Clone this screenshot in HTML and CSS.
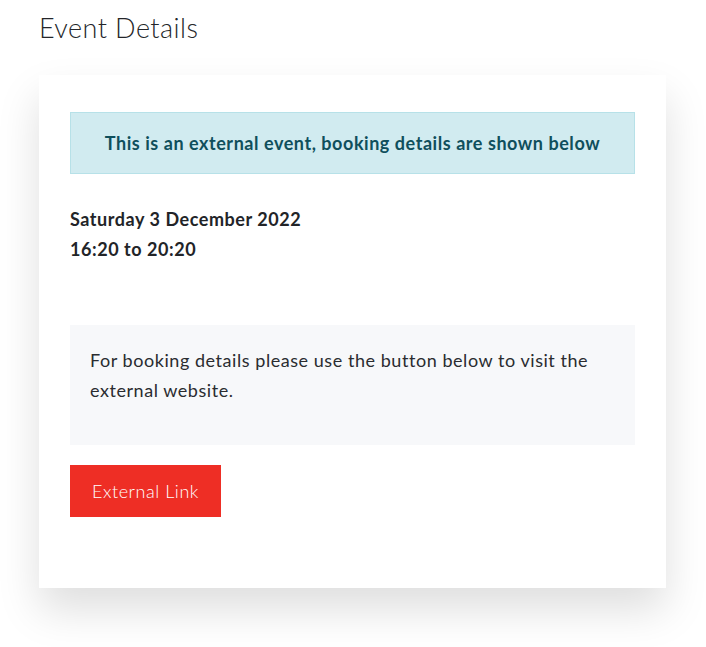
FILE: index.html
```html
<!DOCTYPE html>
<html lang="en">
<head>
<meta charset="utf-8">
<title>Event Details</title>
<link rel="stylesheet" href="styles.css">
</head>
<body>
<main class="page">
  <h1 class="page-title">Event Details</h1>
  <section class="card">
    <div class="notice">This is an external event, booking details are shown below</div>
    <div class="when">
      <div>Saturday 3 December 2022</div>
      <div>16:20 to 20:20</div>
    </div>
    <div class="info">For booking details please use the button below to visit the external website.</div>
    <a class="btn" href="#">External Link</a>
  </section>
</main>
</body>
</html>
```
FILE: styles.css
```css
* { box-sizing: border-box; }
html, body { margin: 0; padding: 0; background: #ffffff; }
body {
  font-family: Lato, "Open Sans", "Liberation Sans", sans-serif;
  color: #222428;
  letter-spacing: 0.55px;
}
.page {
  padding: 8px 40px 59px 39px;
}
.page-title {
  margin: 0 0 28px 0;
  font-size: 27px;
  font-weight: 300;
  line-height: 39px;
  letter-spacing: 0.45px;
  color: #24262a;
}
.card {
  background: #fff;
  box-shadow: 0 22px 40px rgba(0,0,0,0.13);
  padding: 37px 31px 71px 31px;
  display: flex;
  flex-direction: column;
  align-items: flex-start;
}
.notice {
  align-self: stretch;
  background: #d1ebf0;
  border: 1px solid #b7e1e8;
  color: #0f4f5c;
  font-weight: 700;
  font-size: 18px;
  text-align: center;
  height: 62px;
  line-height: 60px;
}
.when {
  margin-top: 30px;
  font-weight: 700;
  font-size: 18px;
  line-height: 30px;
  color: #222428;
}
.info {
  align-self: stretch;
  margin-top: 61px;
  background: #f7f8fa;
  padding: 20px 20px 0 20px;
  height: 120px;
  font-size: 18px;
  line-height: 30px;
  color: #2a2c30;
}
.btn {
  margin-top: 20px;
  background: #ee2e25;
  color: #fff;
  text-decoration: none;
  font-size: 18px;
  font-weight: 300;
  height: 52px;
  line-height: 52px;
  padding: 0 22px;
}
```
